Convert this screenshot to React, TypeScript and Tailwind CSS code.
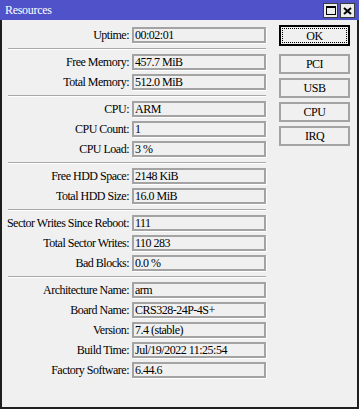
import React from "react";

const sections: [string, string][][] = [
  [["Uptime:", "00:02:01"]],
  [
    ["Free Memory:", "457.7 MiB"],
    ["Total Memory:", "512.0 MiB"],
  ],
  [
    ["CPU:", "ARM"],
    ["CPU Count:", "1"],
    ["CPU Load:", "3 %"],
  ],
  [
    ["Free HDD Space:", "2148 KiB"],
    ["Total HDD Size:", "16.0 MiB"],
  ],
  [
    ["Sector Writes Since Reboot:", "111"],
    ["Total Sector Writes:", "110 283"],
    ["Bad Blocks:", "0.0 %"],
  ],
  [
    ["Architecture Name:", "arm"],
    ["Board Name:", "CRS328-24P-4S+"],
    ["Version:", "7.4 (stable)"],
    ["Build Time:", "Jul/19/2022 11:25:54"],
    ["Factory Software:", "6.44.6"],
  ],
];

function Field({ label, value }: { label: string; value: string }) {
  return (
    <div className="flex items-center h-[16px]">
      <div className="w-[130px] pr-[3px] text-right whitespace-nowrap">{label}</div>
      <div className="w-[134px] h-[16px] border-2 border-[#a3a3a3] shadow-[1px_1px_0_#ffffff] pl-[1px] flex items-center whitespace-nowrap overflow-hidden">
        {value}
      </div>
    </div>
  );
}

function WinButton({ label, focused }: { label: string; focused?: boolean }) {
  if (focused) {
    return (
      <div className="w-[71px] h-[21px] border-2 border-black p-[1px]">
        <div className="h-full border border-dotted border-black flex items-center justify-center">{label}</div>
      </div>
    );
  }
  return (
    <div className="w-[71px] h-[20px] border-2 border-[#a3a3a3] flex items-center justify-center">{label}</div>
  );
}

export default function App() {
  return (
    <div
      className="w-[359px] h-[409px] bg-[#f0f0f0] flex flex-col text-[12px] leading-none tracking-[-0.5px] text-black"
      style={{ fontFamily: '"Liberation Serif", "Times New Roman", serif' }}
    >
      <div className="h-[20px] bg-[#4f52c9] flex items-center justify-between pl-[5px] pr-[4px]">
        <span className="text-white tracking-[-0.3px]">Resources</span>
        <div className="flex gap-[2px] mt-[1px]">
          <div className="w-[15px] h-[15px] bg-[#ececec] border border-[#3a3a3a] flex items-center justify-center">
            <div className="w-[10px] h-[9px] border border-t-2 border-black" />
          </div>
          <div className="w-[15px] h-[15px] bg-[#ececec] border border-[#3a3a3a] flex items-center justify-center">
            <svg width="9" height="8" viewBox="0 0 9 8">
              <path d="M1 1 L8 7 M8 1 L1 7" stroke="#000" strokeWidth="2" />
            </svg>
          </div>
        </div>
      </div>
      <div className="flex-1 flex border-l-2 border-r-2 border-b-2 border-[#1e1e1e]">
        <div className="flex flex-col pt-[7px]">
          {sections.map((rows, i) => (
            <div key={i} className="flex flex-col">
              {i > 0 && <div className="ml-[6px] w-[258px] mt-[5px] mb-[4px] border-t border-[#a8a8a8] border-b border-b-white" />}
              <div className="flex flex-col gap-[4px]">
                {rows.map(([l, v]) => (
                  <Field key={l} label={l} value={v} />
                ))}
              </div>
            </div>
          ))}
        </div>
        <div className="ml-[13px] pt-[5px] flex flex-col">
          <WinButton label="OK" focused />
          <div className="mt-[8px] flex flex-col gap-[4px]">
            <WinButton label="PCI" />
            <WinButton label="USB" />
            <WinButton label="CPU" />
            <WinButton label="IRQ" />
          </div>
        </div>
      </div>
    </div>
  );
}
